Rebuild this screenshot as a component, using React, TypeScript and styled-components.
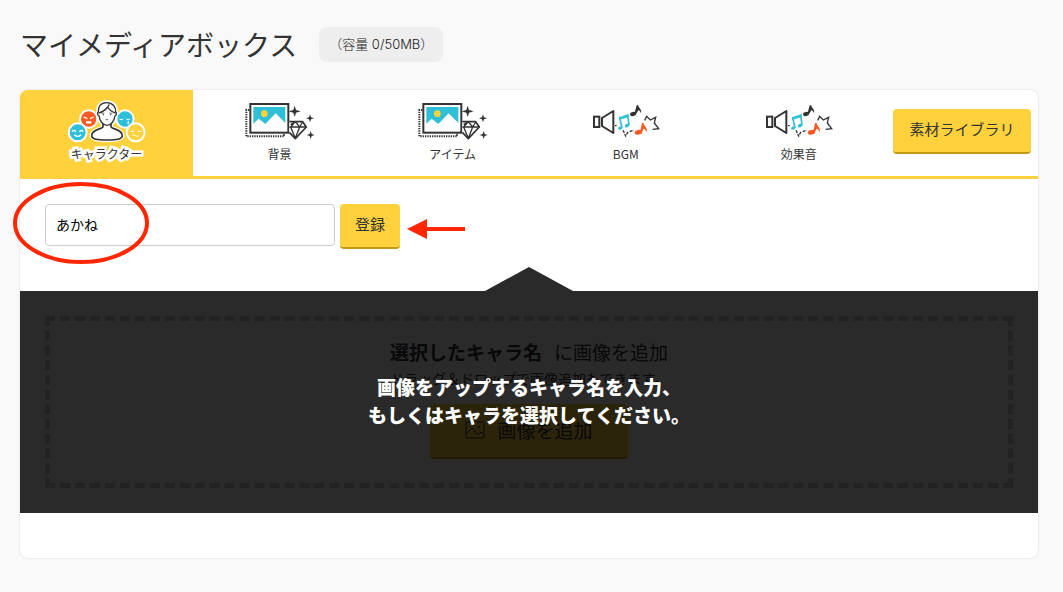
import React, { useState } from "react";
import styled, { createGlobalStyle, css } from "styled-components";

const color = {
  page: "#f9f9f9",
  ink: "#333",
  yellow: "#ffd23d",
  yellowDark: "#c39a14",
  cyan: "#2fbfd9",
  orange: "#ff5a24",
  mark: "#ff2600",
};

const GlobalStyle = createGlobalStyle`
  *, *::before, *::after { box-sizing: border-box; }
  body {
    margin: 0;
    background: ${color.page};
    color: ${color.ink};
    font-family: "Noto Sans CJK JP", "Noto Sans", sans-serif;
    font-size: 14px;
  }
  button, input { font-family: inherit; color: inherit; margin: 0; }
`;

const Page = styled.main`
  padding: 27px 25px 32px 20px;
`;

const TitleRow = styled.header`
  display: flex;
  align-items: center;
  gap: 22px;
  margin-bottom: 28px;
`;

const Title = styled.h1`
  margin: 0;
  font-size: 28px;
  line-height: 35px;
  font-weight: 400;
`;

const Capacity = styled.span`
  padding: 0 10px;
  border-radius: 8px;
  background: #eee;
  color: #222;
  font-family: Inter, "Noto Sans CJK JP", sans-serif;
  font-size: 13px;
  line-height: 35px;
  font-weight: 300;
  white-space: nowrap;
`;

const Card = styled.section`
  padding-bottom: 45px;
  border-radius: 8px;
  background: #fff;
  box-shadow: 0 0 2px rgba(0, 0, 0, 0.16);
`;

const TabBar = styled.div`
  display: flex;
  align-items: flex-start;
  border-bottom: 3px solid ${color.yellow};
`;

const TabList = styled.div`
  display: flex;
  flex: 0 0 85%;
`;

const Tab = styled.button<{ $active: boolean }>`
  flex: 1;
  display: flex;
  flex-direction: column;
  align-items: center;
  padding: 8px 0 12px;
  border: 0;
  background: transparent;
  cursor: pointer;
  ${(p) =>
    p.$active &&
    css`
      background: ${color.yellow};
      border-top-left-radius: 8px;
    `}
`;

const TabLabel = styled.span<{ $outlined: boolean }>`
  font-size: 12px;
  line-height: 20px;
  ${(p) =>
    p.$outlined &&
    css`
      paint-order: stroke fill;
      -webkit-text-stroke: 5px #fff;
    `}
`;

const YellowButton = styled.button<{ $large?: boolean }>`
  display: inline-flex;
  align-items: center;
  justify-content: center;
  gap: 12px;
  padding: ${(p) => (p.$large ? "0 35px 2px" : "0 15px 4px")};
  border: 0;
  border-bottom: 2px solid ${color.yellowDark};
  border-radius: 4px;
  background: ${color.yellow};
  font-size: ${(p) => (p.$large ? "19px" : "15px")};
  line-height: ${(p) => (p.$large ? "51px" : "39px")};
  font-weight: 400;
  white-space: nowrap;
  cursor: pointer;
`;

const LibrarySlot = styled.div`
  display: flex;
  flex: 1;
  justify-content: flex-end;
  padding: 19px 7px 0 0;
`;

const LibraryButton = styled(YellowButton)`
  min-width: 138px;
`;

const NameForm = styled.form`
  position: relative;
  display: flex;
  align-items: flex-start;
  gap: 5px;
  padding: 25px 25px 42px;
`;

const NameInput = styled.input`
  width: 290px;
  height: 42px;
  padding: 0 10px 2px;
  border: 1px solid #ccc;
  border-radius: 4px;
  background: #fff;
  color: #000;
  font-size: 14px;
  outline: 0;
`;

const CircleMark = styled.svg`
  position: absolute;
  left: -8px;
  top: 3px;
  pointer-events: none;
`;

const ArrowMark = styled.svg`
  position: absolute;
  left: 387px;
  top: 39px;
  pointer-events: none;
`;

const DropPanel = styled.div`
  position: relative;
  padding: 25px;
  background: #f8f8f8;
`;

const DropArea = styled.div`
  display: flex;
  flex-direction: column;
  align-items: center;
  padding: 18px 0 24px;
  border: 5px dashed #c8c8c8;
`;

const DropHeading = styled.h2`
  display: flex;
  gap: 12px;
  margin: 0;
  font-size: 19px;
  line-height: 26px;
  font-weight: 400;

  strong {
    font-weight: 700;
  }
`;

const DropHint = styled.p`
  margin: 0 0 13px;
  font-size: 14px;
  line-height: 26px;
`;

const Shade = styled.div`
  position: absolute;
  inset: 0;
  display: flex;
  align-items: center;
  justify-content: center;
  padding-bottom: 2px;
  background: rgba(0, 0, 0, 0.83);
  color: #fff;
  font-size: 19px;
  line-height: 28px;
  font-weight: 900;
  text-align: center;
`;

const Notch = styled.svg`
  position: absolute;
  left: calc(50% - 44px);
  bottom: 100%;
`;

function CharacterIcon() {
  return (
    <svg width="82" height="46" viewBox="48 24 246 138" fill="none" aria-hidden="true">
      <g stroke="#fff" strokeWidth="6">
        <circle cx="116" cy="87" r="26" fill={color.orange} />
        <circle cx="225" cy="87" r="26" fill={color.cyan} />
        <circle cx="83" cy="127" r="27" fill={color.cyan} />
        <circle cx="257" cy="127" r="27" fill={color.yellow} />
      </g>
      <g stroke="#fff" strokeWidth="4">
        <path d="M101 81l11 5M131 81l-11 5" />
        <path d="M108 97h16" strokeWidth="7" />
        <path d="M208 87q5 5 11 0M229 87q5 5 11 0" strokeWidth="3" />
        <path d="M66 125q6-7 12 0M88 125q6-7 12 0M73 134q10 10 20 0" />
        <path d="M241 124h12M262 124h12M247 137q5-5 10 0q5 5 10 0" strokeWidth="3" />
      </g>
      <path d="M235 92q6 8 0 11q-6-3 0-11z" fill="#fff" />
      <g strokeLinejoin="round">
        <path
          d="M170 37c-19 0-27 13-26 29l2 12c1 12 7 19 13 24v8c0 8-34 6-34 27c0 8 12 13 46 13s46-5 46-13c0-21-34-19-34-27v-8c7-5 12-12 13-24l2-12c1-16-8-29-28-29z"
          fill="#fff"
          stroke="#fff"
          strokeWidth="12"
        />
        <path
          d="M159 102v8c0 8-34 6-34 27c0 8 12 13 46 13s46-5 46-13c0-21-34-19-34-27v-8"
          fill="#fff"
          stroke={color.ink}
          strokeWidth="5"
        />
        <path
          d="M170 38c-19 0-26 13-25 28c-4 2-2 11 2 12c2 15 12 28 24 28s22-13 24-28c4-1 6-10 2-12c1-15-8-28-27-28z"
          fill="#fff"
          stroke={color.ink}
          strokeWidth="4"
        />
        <path d="M146 69c10-3 20-8 27-18c5 9 13 15 24 18M173 51l5-8" stroke={color.ink} strokeWidth="4" />
      </g>
      <path d="M154 70l9-1M178 69l9 1M166 89h9" stroke={color.ink} strokeWidth="2" />
      <circle cx="160" cy="74" r="2" fill={color.ink} />
      <circle cx="182" cy="74" r="2" fill={color.ink} />
    </svg>
  );
}

function PictureIcon() {
  return (
    <svg width="74" height="46" viewBox="38 24 222 138" fill="none" aria-hidden="true">
      <path d="M57 60H48V139H161V129" stroke={color.ink} strokeWidth="6" strokeDasharray="4 3" />
      <rect x="60" y="42" width="114" height="86" fill="#fff" stroke={color.ink} strokeWidth="6" />
      <path d="M69 51H165V99L136 70L105 102L85 86L69 101z" fill={color.cyan} />
      <circle cx="102" cy="71" r="10" fill={color.yellow} />
      <g stroke={color.ink} strokeWidth="5" strokeLinejoin="round">
        <path d="M177 95H217L228 111L195 146L177 127" fill="#fff" />
        <path d="M177 111H228M181 111L195 95L208 111L195 145L181 111M195 95L181 104M208 111L217 96" strokeWidth="4" />
      </g>
      <g fill={color.ink}>
        <path d="M193 47l4 13l14 4l-14 4l-4 13l-4-13l-14-4l14-4z" />
        <path d="M239 73l3 9l9 3l-9 3l-3 9l-3-9l-9-3l9-3z" />
        <path d="M241 123l3 9l9 3l-9 3l-3 9l-3-9l-9-3l9-3z" />
      </g>
    </svg>
  );
}

function SoundIcon() {
  return (
    <svg width="74" height="46" viewBox="27 24 222 138" fill="none" aria-hidden="true">
      <g stroke={color.ink} strokeWidth="6">
        <rect x="42" y="80" width="16" height="31" />
        <path d="M66 84L100 63V129L66 108z" strokeLinejoin="round" />
      </g>
      <path d="M105 107h5M129 121l8 17l7-13M149 125l12-4" stroke={color.ink} strokeWidth="4" strokeDasharray="9 3" />
      <path d="M194 91l6-12l11 11l16-8l-4 17l13 17l-18 2" stroke={color.ink} strokeWidth="4" />
      <g fill={color.cyan}>
        <ellipse cx="121" cy="114" rx="7" ry="5" transform="rotate(-20 121 114)" />
        <ellipse cx="141" cy="107" rx="7" ry="5" transform="rotate(-20 141 107)" />
        <path d="M117 82l29-10v9l-29 9z" />
      </g>
      <path d="M119 83l7 30M143 74l4 32" stroke={color.cyan} strokeWidth="5" />
      <g fill={color.ink}>
        <ellipse cx="159" cy="72" rx="9" ry="6" transform="rotate(-15 159 72)" />
        <path d="M170 46h5c0 8 12 12 8 24c-2-6-5-8-8-9l-8 13l-4-2z" />
      </g>
      <g fill={color.orange}>
        <ellipse cx="175" cy="127" rx="11" ry="7" transform="rotate(-15 175 127)" />
        <path d="M186 99h5c0 9 13 14 9 27c-3-7-6-9-10-10l-5 14l-5-2z" />
      </g>
    </svg>
  );
}

function ImageIcon() {
  return (
    <svg width="20" height="18" viewBox="0 0 20 18" fill="none" stroke={color.ink} aria-hidden="true">
      <rect x="1" y="1" width="18" height="16" rx="1" />
      <path d="M1 13l6-6l6 7l3-3l3 3" />
      <circle cx="14" cy="6" r="1" />
    </svg>
  );
}

const tabs = [
  { label: "キャラクター", Icon: CharacterIcon },
  { label: "背景", Icon: PictureIcon },
  { label: "アイテム", Icon: PictureIcon },
  { label: "BGM", Icon: SoundIcon },
  { label: "効果音", Icon: SoundIcon },
];

export default function App() {
  const [active, setActive] = useState(0);
  const [name, setName] = useState("あかね");

  return (
    <>
      <GlobalStyle />
      <Page>
        <TitleRow>
          <Title>マイメディアボックス</Title>
          <Capacity>（容量 0/50MB）</Capacity>
        </TitleRow>
        <Card>
          <TabBar>
            <TabList role="tablist">
              {tabs.map(({ label, Icon }, i) => (
                <Tab
                  key={label}
                  type="button"
                  role="tab"
                  aria-selected={active === i}
                  $active={active === i}
                  onClick={() => setActive(i)}
                >
                  <Icon />
                  <TabLabel $outlined={active === i}>{label}</TabLabel>
                </Tab>
              ))}
            </TabList>
            <LibrarySlot>
              <LibraryButton type="button">素材ライブラリ</LibraryButton>
            </LibrarySlot>
          </TabBar>
          <NameForm onSubmit={(e) => e.preventDefault()}>
            <NameInput
              type="text"
              aria-label="キャラ名"
              value={name}
              onChange={(e) => setName(e.target.value)}
            />
            <YellowButton type="submit">登録</YellowButton>
            <CircleMark width="138" height="83" viewBox="0 0 138 83" fill="none" aria-hidden="true">
              <ellipse cx="69" cy="41" rx="66" ry="39" stroke={color.mark} strokeWidth="4" />
            </CircleMark>
            <ArrowMark width="58" height="22" viewBox="0 0 58 22" fill={color.mark} aria-hidden="true">
              <path d="M0 11L20 1V9H58V13H20V21z" />
            </ArrowMark>
          </NameForm>
          <DropPanel>
            <DropArea>
              <DropHeading>
                <strong>選択したキャラ名</strong>
                <span>に画像を追加</span>
              </DropHeading>
              <DropHint>ドラッグ＆ドロップで画像追加もできます。</DropHint>
              <YellowButton type="button" $large>
                <ImageIcon />
                画像を追加
              </YellowButton>
            </DropArea>
            <Shade>
              <Notch width="88" height="24" viewBox="0 0 88 24" aria-hidden="true">
                <path d="M0 24L44 0L88 24z" fill="#2a2a2a" />
              </Notch>
              <span>
                画像をアップするキャラ名を入力、
                <br />
                もしくはキャラを選択してください。
              </span>
            </Shade>
          </DropPanel>
        </Card>
      </Page>
    </>
  );
}
